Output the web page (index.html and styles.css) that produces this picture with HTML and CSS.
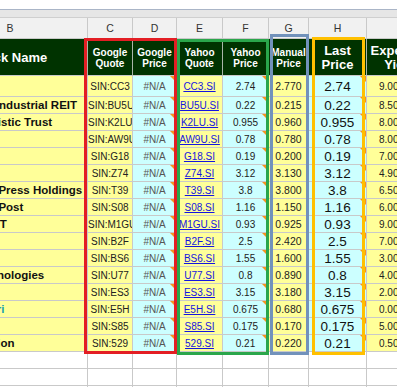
FILE: index.html
```html
<!DOCTYPE html>
<html lang="en">
<head>
    <meta charset="UTF-8">
    <meta name="viewport" content="width=device-width, initial-scale=1.0">
    <title>Dividend Portfolio</title>
    <link rel="stylesheet" href="styles.css">
</head>
<body>
    <div class="sheet">
        <div class="topbar"></div>
        <div class="band"></div>

        <div class="grid">
            <!-- column letters -->
            <div class="cell letter"><span>B</span></div>
            <div class="cell letter"><span>C</span></div>
            <div class="cell letter"><span>D</span></div>
            <div class="cell letter"><span>E</span></div>
            <div class="cell letter"><span>F</span></div>
            <div class="cell letter"><span>G</span></div>
            <div class="cell letter"><span>H</span></div>
            <div class="cell letter"><span>I</span></div>

            <!-- header -->
            <div class="cell head big"><span>Stock Name</span></div>
            <div class="cell head"><span>Google<br>Quote</span></div>
            <div class="cell head"><span>Google<br>Price</span></div>
            <div class="cell head"><span>Yahoo<br>Quote</span></div>
            <div class="cell head"><span>Yahoo<br>Price</span></div>
            <div class="cell head"><span>Manual<br>Price</span></div>
            <div class="cell head big"><span>Last<br>Price</span></div>
            <div class="cell head big"><span>Expected<br>Yield</span></div>

            <div class="cell name"><span>StarHub</span></div>
            <div class="cell gq"><span>SIN:CC3</span></div>
            <div class="cell gp note"><span>#N/A</span></div>
            <div class="cell yq"><span><a href="#">CC3.SI</a></span></div>
            <div class="cell yp note"><span>2.74</span></div>
            <div class="cell mp"><span>2.770</span></div>
            <div class="cell lp note"><span>2.74</span></div>
            <div class="cell ey"><span>9.00%</span></div>

            <div class="cell name"><span>Mapletree Industrial REIT</span></div>
            <div class="cell gq"><span>SIN:BU5U</span></div>
            <div class="cell gp note"><span>#N/A</span></div>
            <div class="cell yq"><span><a href="#">BU5U.SI</a></span></div>
            <div class="cell yp note"><span>0.22</span></div>
            <div class="cell mp"><span>0.215</span></div>
            <div class="cell lp note"><span>0.22</span></div>
            <div class="cell ey"><span>8.50%</span></div>

            <div class="cell name"><span>Cache Logistic Trust</span></div>
            <div class="cell gq"><span>SIN:K2LU</span></div>
            <div class="cell gp note"><span>#N/A</span></div>
            <div class="cell yq"><span><a href="#">K2LU.SI</a></span></div>
            <div class="cell yp note"><span>0.955</span></div>
            <div class="cell mp"><span>0.960</span></div>
            <div class="cell lp note"><span>0.955</span></div>
            <div class="cell ey"><span>8.00%</span></div>

            <div class="cell name"><span>First REIT</span></div>
            <div class="cell gq"><span>SIN:AW9U</span></div>
            <div class="cell gp note"><span>#N/A</span></div>
            <div class="cell yq"><span><a href="#">AW9U.SI</a></span></div>
            <div class="cell yp note"><span>0.78</span></div>
            <div class="cell mp"><span>0.780</span></div>
            <div class="cell lp note"><span>0.78</span></div>
            <div class="cell ey"><span>8.00%</span></div>

            <div class="cell name"><span>Genting</span></div>
            <div class="cell gq"><span>SIN:G18</span></div>
            <div class="cell gp note"><span>#N/A</span></div>
            <div class="cell yq"><span><a href="#">G18.SI</a></span></div>
            <div class="cell yp note"><span>0.19</span></div>
            <div class="cell mp"><span>0.200</span></div>
            <div class="cell lp note"><span>0.19</span></div>
            <div class="cell ey"><span>7.00%</span></div>

            <div class="cell name"><span>SingTel</span></div>
            <div class="cell gq"><span>SIN:Z74</span></div>
            <div class="cell gp note"><span>#N/A</span></div>
            <div class="cell yq"><span><a href="#">Z74.SI</a></span></div>
            <div class="cell yp note"><span>3.12</span></div>
            <div class="cell mp"><span>3.130</span></div>
            <div class="cell lp note"><span>3.12</span></div>
            <div class="cell ey"><span>4.90%</span></div>

            <div class="cell name"><span>Singapore Press Holdings</span></div>
            <div class="cell gq"><span>SIN:T39</span></div>
            <div class="cell gp note"><span>#N/A</span></div>
            <div class="cell yq"><span><a href="#">T39.SI</a></span></div>
            <div class="cell yp note"><span>3.8</span></div>
            <div class="cell mp"><span>3.800</span></div>
            <div class="cell lp note"><span>3.8</span></div>
            <div class="cell ey"><span>6.50%</span></div>

            <div class="cell name"><span>Singapore Post</span></div>
            <div class="cell gq"><span>SIN:S08</span></div>
            <div class="cell gp note"><span>#N/A</span></div>
            <div class="cell yq"><span><a href="#">S08.SI</a></span></div>
            <div class="cell yp note"><span>1.16</span></div>
            <div class="cell mp"><span>1.150</span></div>
            <div class="cell lp note"><span>1.16</span></div>
            <div class="cell ey"><span>6.00%</span></div>

            <div class="cell name"><span>Keppel REIT</span></div>
            <div class="cell gq"><span>SIN:M1GU</span></div>
            <div class="cell gp note"><span>#N/A</span></div>
            <div class="cell yq"><span><a href="#">M1GU.SI</a></span></div>
            <div class="cell yp note"><span>0.93</span></div>
            <div class="cell mp"><span>0.925</span></div>
            <div class="cell lp note"><span>0.93</span></div>
            <div class="cell ey"><span>9.00%</span></div>

            <div class="cell name"><span>M1 Ltd</span></div>
            <div class="cell gq"><span>SIN:B2F</span></div>
            <div class="cell gp note"><span>#N/A</span></div>
            <div class="cell yq"><span><a href="#">B2F.SI</a></span></div>
            <div class="cell yp note"><span>2.5</span></div>
            <div class="cell mp"><span>2.420</span></div>
            <div class="cell lp note"><span>2.5</span></div>
            <div class="cell ey"><span>7.00%</span></div>

            <div class="cell name"><span>YZJ</span></div>
            <div class="cell gq"><span>SIN:BS6</span></div>
            <div class="cell gp note"><span>#N/A</span></div>
            <div class="cell yq"><span><a href="#">BS6.SI</a></span></div>
            <div class="cell yp note"><span>1.55</span></div>
            <div class="cell mp"><span>1.600</span></div>
            <div class="cell lp note"><span>1.55</span></div>
            <div class="cell ey"><span>3.00%</span></div>

            <div class="cell name"><span>Sarin Technologies</span></div>
            <div class="cell gq"><span>SIN:U77</span></div>
            <div class="cell gp note"><span>#N/A</span></div>
            <div class="cell yq"><span><a href="#">U77.SI</a></span></div>
            <div class="cell yp note"><span>0.8</span></div>
            <div class="cell mp"><span>0.890</span></div>
            <div class="cell lp note"><span>0.8</span></div>
            <div class="cell ey"><span>4.00%</span></div>

            <div class="cell name"><span>STI ETF</span></div>
            <div class="cell gq"><span>SIN:ES3</span></div>
            <div class="cell gp note"><span>#N/A</span></div>
            <div class="cell yq"><span><a href="#">ES3.SI</a></span></div>
            <div class="cell yp note"><span>3.15</span></div>
            <div class="cell mp"><span>3.180</span></div>
            <div class="cell lp note"><span>3.15</span></div>
            <div class="cell ey"><span>2.00%</span></div>

            <div class="cell name teal"><span>Golden Agri</span></div>
            <div class="cell gq"><span>SIN:E5H</span></div>
            <div class="cell gp note"><span>#N/A</span></div>
            <div class="cell yq"><span><a href="#">E5H.SI</a></span></div>
            <div class="cell yp note"><span>0.675</span></div>
            <div class="cell mp"><span>0.680</span></div>
            <div class="cell lp note"><span>0.675</span></div>
            <div class="cell ey"><span>0.00%</span></div>

            <div class="cell name"><span>Straco</span></div>
            <div class="cell gq"><span>SIN:S85</span></div>
            <div class="cell gp note"><span>#N/A</span></div>
            <div class="cell yq"><span><a href="#">S85.SI</a></span></div>
            <div class="cell yp note"><span>0.175</span></div>
            <div class="cell mp"><span>0.170</span></div>
            <div class="cell lp note"><span>0.175</span></div>
            <div class="cell ey"><span>5.00%</span></div>

            <div class="cell name"><span>Tiger Aviation</span></div>
            <div class="cell gq"><span>SIN:529</span></div>
            <div class="cell gp note"><span>#N/A</span></div>
            <div class="cell yq"><span><a href="#">529.SI</a></span></div>
            <div class="cell yp note"><span>0.21</span></div>
            <div class="cell mp"><span>0.220</span></div>
            <div class="cell lp note"><span>0.21</span></div>
            <div class="cell ey"><span>0.50%</span></div>

            <!-- empty rows -->
            <div class="cell"></div><div class="cell"></div><div class="cell"></div><div class="cell"></div>
            <div class="cell"></div><div class="cell"></div><div class="cell"></div><div class="cell"></div>
            <div class="cell"></div><div class="cell"></div><div class="cell"></div><div class="cell"></div>
            <div class="cell"></div><div class="cell"></div><div class="cell"></div><div class="cell"></div>
            <div class="cell"></div><div class="cell"></div><div class="cell"></div><div class="cell"></div>
            <div class="cell"></div><div class="cell"></div><div class="cell"></div><div class="cell"></div>
        </div>

        <!-- highlight boxes drawn over the sheet -->
        <div class="box box-red"></div>
        <div class="box box-green"></div>
        <div class="box box-blue"></div>
        <div class="box box-orange"></div>
    </div>
</body>
</html>
```

FILE: styles.css
```css
body {
    margin: 0;
    font-family: "Liberation Sans", Arial, sans-serif;
    background-color: #fff;
}

.sheet {
    position: relative;
    width: 397px;
    height: 387px;
    overflow: hidden;
}

.topbar {
    height: 9px;
    border-bottom: 1px solid #aab5c7;
}

.band {
    height: 7px;
    background-color: #e6e6e6;
    border-bottom: 1px solid #cfcfcf;
}

.grid {
    display: grid;
    grid-template-columns: 155px 45px 44px 46px 46px 40px 58px 66px;
    grid-template-rows: 21px 37px 21px;
    grid-auto-rows: 17px;
    width: 500px;
    margin-left: -67px;
}

.cell {
    position: relative;
    display: flex;
    align-items: center;
    box-sizing: border-box;
    border-right: 1px solid #c9c9c9;
    border-bottom: 1px solid #c9c9c9;
    font-size: 10px;
    color: #222;
    white-space: nowrap;
    overflow: hidden;
}

.cell > span {
    flex: 1;
    min-width: 0;
    text-align: center;
    overflow: hidden;
}

.letter {
    background-color: #f1f1f1;
    font-size: 10.5px;
    color: #333;
}

.head {
    background-color: #003300;
    color: #fff;
    font-weight: bold;
    font-size: 10px;
    line-height: 11px;
    border-right-color: #a9b5a9;
    padding-top: 2px;
}

.head.big {
    font-size: 13px;
    line-height: 14px;
}

.name,
.gq,
.yq,
.mp,
.ey {
    background-color: #ffff99;
}

.gp,
.yp,
.lp {
    background-color: #ccffff;
}

.name {
    font-size: 11.5px;
    font-weight: bold;
    color: #111;
}

.name > span {
    text-align: left;
    padding-left: 6px;
}

.name.teal {
    color: #1ba2ad;
}

.gp {
    color: #555;
}

.yq a {
    color: #1515e0;
    text-decoration: underline;
}

.mp {
    font-size: 10.5px;
}

.lp {
    font-size: 13.5px;
    color: #111;
}

.ey > span {
    text-align: left;
    padding-left: 12px;
}

/* comment marker in the corner */
.note::after {
    content: "";
    position: absolute;
    top: 0;
    right: 0;
    border-left: 6px solid transparent;
    border-top: 6px solid #f7931e;
}

.box {
    position: absolute;
    box-sizing: border-box;
    border: 3px solid;
}

.box-red {
    left: 84px;
    top: 38px;
    width: 93px;
    height: 316px;
    border-color: #e31e24;
}

.box-green {
    left: 177px;
    top: 39px;
    width: 92px;
    height: 316px;
    border-color: #2aa64b;
}

.box-blue {
    left: 270px;
    top: 34px;
    width: 39px;
    height: 321px;
    border-color: #7292bb;
}

.box-orange {
    left: 312px;
    top: 37px;
    width: 53px;
    height: 318px;
    border-color: #ffc000;
}
```
